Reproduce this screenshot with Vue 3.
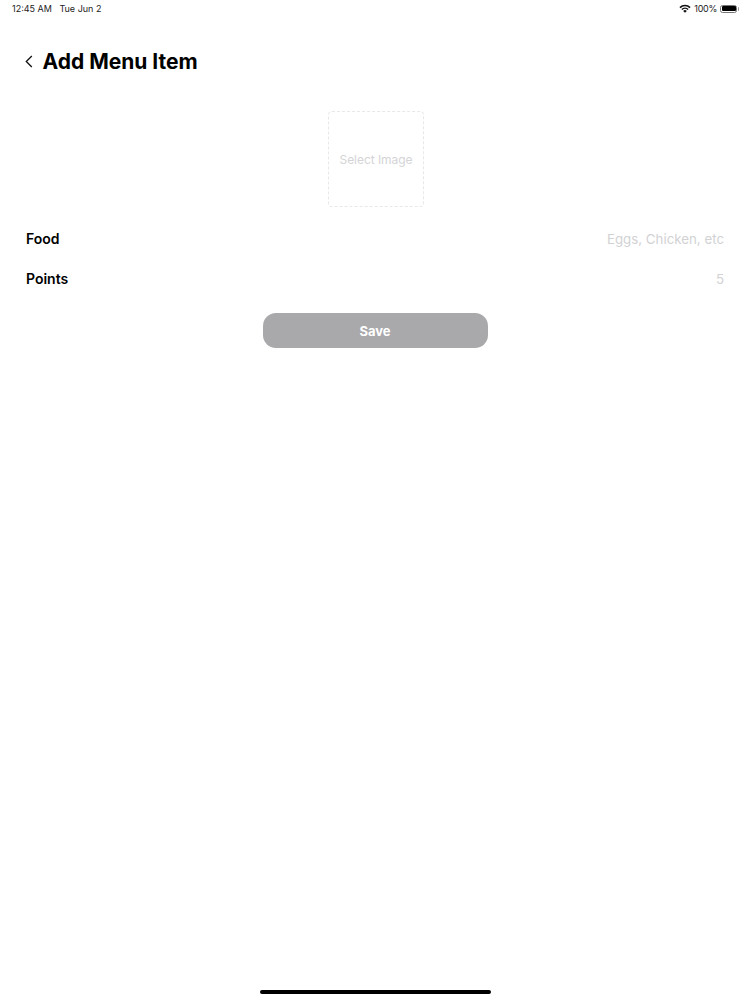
<script setup>
const fields = [
  { label: 'Food', placeholder: 'Eggs, Chicken, etc' },
  { label: 'Points', placeholder: '5' },
]
</script>

<template>
  <div class="screen">
    <div class="status">
      <div class="status-left"><span>12:45 AM</span><span>Tue Jun 2</span></div>
      <div class="status-right">
        <svg class="wifi" width="12" height="9" viewBox="0 0 12 9">
          <path d="M0.4 3.1A8 8 0 0 1 11.6 3.1L10.5 4.2A6.4 6.4 0 0 0 1.5 4.2Z" fill="#111" />
          <path d="M2.3 5A5.2 5.2 0 0 1 9.7 5L8.6 6.1A3.7 3.7 0 0 0 3.4 6.1Z" fill="#111" />
          <path d="M4.2 6.9A2.6 2.6 0 0 1 7.8 6.9L6 8.8Z" fill="#111" />
        </svg>
        <span class="pct">100%</span>
        <div class="battery"><div class="battery-fill"></div></div>
      </div>
    </div>

    <header class="header">
      <svg class="back" width="8" height="13" viewBox="0 0 8 13">
        <path d="M6.8 1L1.3 6.5L6.8 12" fill="none" stroke="#111" stroke-width="1.3" />
      </svg>
      <h1>Add Menu Item</h1>
    </header>

    <div class="picker"><span>Select Image</span></div>

    <div class="fields">
      <div v-for="f in fields" :key="f.label" class="field">
        <span class="label">{{ f.label }}</span>
        <span class="placeholder">{{ f.placeholder }}</span>
      </div>
    </div>

    <button class="save">Save</button>

    <div class="home-wrap"><div class="home"></div></div>
  </div>
</template>

<style scoped>
.screen {
  width: 750px;
  height: 1000px;
  background: #fff;
  font-family: Inter, "Liberation Sans", sans-serif;
  color: #000;
  display: flex;
  flex-direction: column;
  overflow: hidden;
}
.status {
  height: 17px;
  flex: none;
  padding: 0 10px 0 12px;
  display: flex;
  justify-content: space-between;
  align-items: center;
  font-size: 9px;
  color: #222;
}
.status-left {
  display: flex;
  gap: 7.5px;
}
.status-right {
  display: flex;
  align-items: center;
  gap: 3px;
}
.pct {
  letter-spacing: -0.3px;
}
.battery {
  width: 17px;
  height: 8px;
  border: 1px solid #777;
  border-radius: 2.5px;
  padding: 0.5px;
  box-sizing: border-box;
  margin-right: 3px;
  position: relative;
}
.battery::after {
  content: "";
  position: absolute;
  right: -3px;
  top: 1px;
  width: 1.5px;
  height: 4px;
  background: #999;
  border-radius: 0 1px 1px 0;
}
.battery-fill {
  width: 100%;
  height: 100%;
  background: #000;
  border-radius: 1px;
}
.header {
  height: 30px;
  margin-top: 29px;
  padding-left: 25px;
  display: flex;
  align-items: center;
  gap: 9.5px;
  flex: none;
}
.header h1 {
  margin: 1px 0 0;
  font-size: 21px;
  font-weight: 700;
  line-height: 30px;
}
.picker {
  width: 96px;
  height: 96px;
  box-sizing: border-box;
  margin: 35px 0 0 328px;
  border: 1px dashed #e8e8ea;
  border-radius: 4px;
  display: flex;
  align-items: center;
  justify-content: center;
  font-size: 12px;
  letter-spacing: -0.05px;
  color: #d4d4d6;
  flex: none;
}
.fields {
  margin-top: 11px;
  padding: 0 26px;
  display: flex;
  flex-direction: column;
  flex: none;
}
.field {
  height: 40px;
  display: flex;
  align-items: center;
  justify-content: space-between;
}
.label {
  font-size: 14px;
  font-weight: 600;
}
.placeholder {
  font-size: 13.3px;
  line-height: 16px;
  margin-top: 1px;
  color: #d2d2d4;
}
.save {
  width: 225px;
  height: 35px;
  margin: 15px auto 0;
  border: none;
  border-radius: 13px;
  background: #a9a8ab;
  color: #fff;
  font-family: inherit;
  font-size: 13px;
  font-weight: 700;
  flex: none;
  padding: 0;
}
.home-wrap {
  margin-top: auto;
  padding-bottom: 6px;
  display: flex;
  justify-content: center;
}
.home {
  width: 231px;
  height: 4px;
  background: #000;
  border-radius: 2px;
}
</style>
